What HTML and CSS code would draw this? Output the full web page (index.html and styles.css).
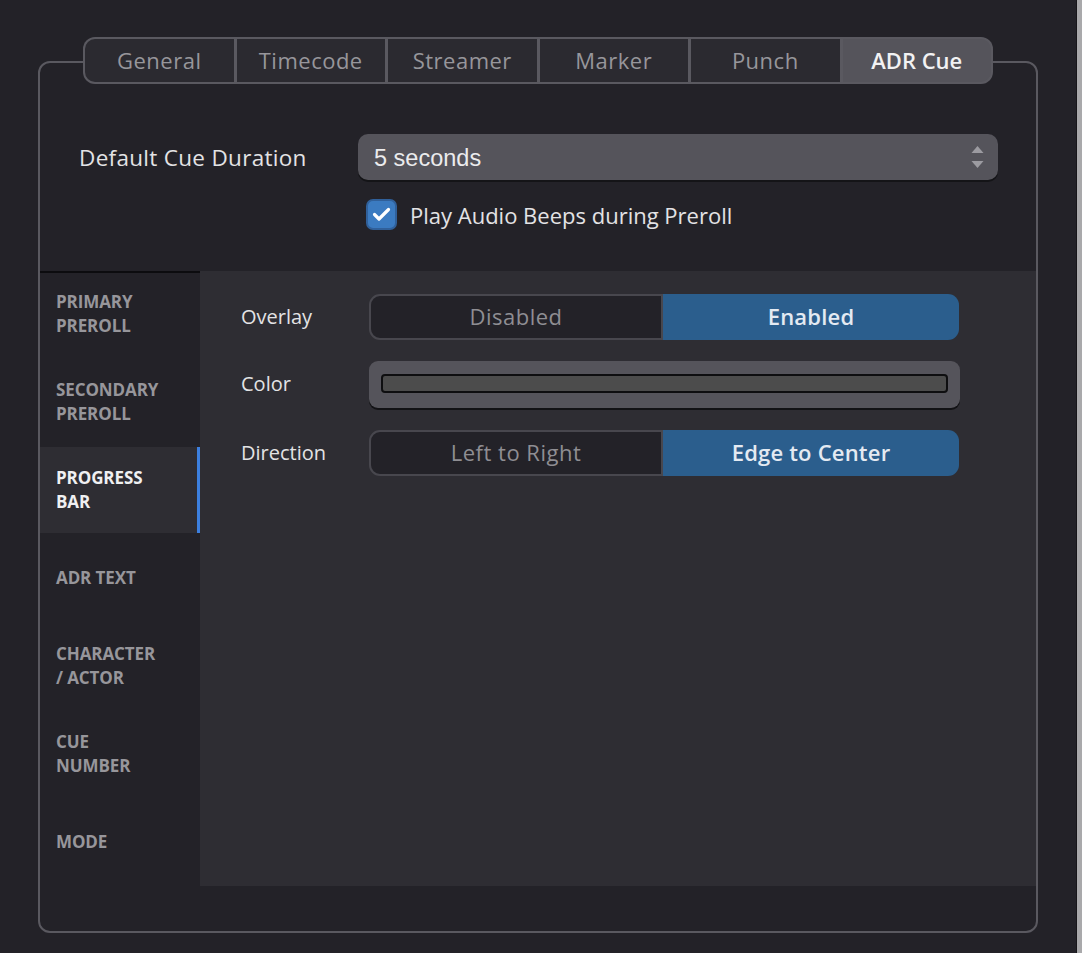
FILE: index.html
```html
<!DOCTYPE html>
<html>
<head>
<meta charset="utf-8">
<link rel="stylesheet" href="styles.css">
</head>
<body>
<div class="window">
  <div class="tabs">
    <div class="tab first">General</div>
    <div class="tab">Timecode</div>
    <div class="tab">Streamer</div>
    <div class="tab">Marker</div>
    <div class="tab">Punch</div>
    <div class="tab last active">ADR Cue</div>
  </div>
  <div class="group">
    <div class="top">
      <div class="row">
        <div class="row-label">Default Cue Duration</div>
        <div class="combo">
          <span class="combo-text">5 seconds</span>
          <svg class="combo-arrows" width="13" height="23" viewBox="0 0 13 23">
            <path d="M6.5 0 L12.5 7 L0.5 7 Z" fill="#9c9ba1"/>
            <path d="M0.5 15 L12.5 15 L6.5 22 Z" fill="#9c9ba1"/>
          </svg>
        </div>
      </div>
      <div class="check-row">
        <div class="checkbox">
          <svg width="19" height="15" viewBox="0 0 19 15">
            <path d="M2.5 7.5 L7 12 L16.5 2.5" fill="none" stroke="#ffffff" stroke-width="3.2" stroke-linecap="round" stroke-linejoin="round"/>
          </svg>
        </div>
        <span class="check-label">Play Audio Beeps during Preroll</span>
      </div>
    </div>
    <div class="lower">
      <div class="sidebar">
        <div class="side-item">PRIMARY<br>PREROLL</div>
        <div class="side-item">SECONDARY<br>PREROLL</div>
        <div class="side-item active">PROGRESS<br>BAR</div>
        <div class="side-item">ADR TEXT</div>
        <div class="side-item">CHARACTER<br>/ ACTOR</div>
        <div class="side-item">CUE<br>NUMBER</div>
        <div class="side-item">MODE</div>
      </div>
      <div class="panel">
        <div class="prow">
          <div class="plabel">Overlay</div>
          <div class="seg">
            <div class="seg-btn off">Disabled</div>
            <div class="seg-btn on">Enabled</div>
          </div>
        </div>
        <div class="prow color-row">
          <div class="plabel">Color</div>
          <div class="color-well">
            <div class="color-swatch"></div>
          </div>
        </div>
        <div class="prow">
          <div class="plabel">Direction</div>
          <div class="seg">
            <div class="seg-btn off">Left to Right</div>
            <div class="seg-btn on">Edge to Center</div>
          </div>
        </div>
      </div>
    </div>
  </div>
</div>
</body>
</html>
```
FILE: styles.css
```css
html {
  background: #a9a9ab;
}
body {
  margin: 0;
  font-family: "Open Sans", "Noto Sans", sans-serif;
}
.window {
  width: 1077px;
  height: 953px;
  box-sizing: border-box;
  background: #232228;
  border-right: 1px solid #17161a;
  padding: 37px 0 0 38px;
}
.tabs {
  position: relative;
  z-index: 1;
  display: flex;
  gap: 3px;
  width: 910px;
  height: 47px;
  box-sizing: border-box;
  margin-left: 45px;
  padding: 2px;
  background: #5a5960;
  border-radius: 12px;
}
.tab {
  flex: 1;
  display: flex;
  align-items: center;
  justify-content: center;
  padding-bottom: 2px;
  background: #2b2a30;
  color: #97969b;
  font-size: 22px;
  letter-spacing: 0.5px;
}
.tab.first {
  border-radius: 10px 0 0 10px;
}
.tab.last {
  border-radius: 0 10px 10px 0;
}
.tab.active {
  background: #55545b;
  color: #f2f2f3;
  font-weight: 600;
  letter-spacing: 0;
}
.group {
  width: 1000px;
  height: 872px;
  box-sizing: border-box;
  margin-top: -23px;
  border: 2px solid #5a5960;
  border-radius: 12px;
  padding-bottom: 45px;
  display: flex;
  flex-direction: column;
}
.top {
  height: 208px;
  box-sizing: border-box;
  padding: 71px 38px 0 39px;
}
.row {
  display: flex;
  align-items: center;
}
.row-label {
  width: 279px;
  color: #e3e3e5;
  font-size: 22.5px;
  letter-spacing: 0.3px;
}
.combo {
  flex: 1;
  height: 46px;
  display: flex;
  align-items: center;
  justify-content: space-between;
  background: #55545b;
  border-radius: 10px;
  box-shadow: 0 2px 0 #141417;
  padding: 0 14px 0 16px;
}
.combo-text {
  font-family: "Liberation Sans", Arial, sans-serif;
  font-size: 23.5px;
  color: #ebebed;
  padding-top: 2px;
}
.combo-arrows {
  display: block;
}
.check-row {
  display: flex;
  align-items: center;
  margin: 19px 0 0 287px;
}
.checkbox {
  width: 31px;
  height: 31px;
  box-sizing: border-box;
  background: #3b7bc1;
  border: 2px solid #30609a;
  border-radius: 7px;
  display: flex;
  align-items: center;
  justify-content: center;
}
.check-label {
  margin-left: 13px;
  font-size: 22px;
  color: #e3e3e5;
}
.lower {
  flex: 1;
  display: flex;
}
.sidebar {
  width: 160px;
  display: flex;
  flex-direction: column;
  gap: 2px;
  box-shadow: inset 0 2px 0 #0c0c0f;
}
.side-item {
  height: 86px;
  box-sizing: border-box;
  display: flex;
  align-items: center;
  padding-left: 16px;
  font-size: 17px;
  font-weight: 700;
  line-height: 24px;
  color: #97969b;
  letter-spacing: -0.1px;
}
.side-item.active {
  background: #2e2d33;
  color: #f0f0f2;
  border-right: 3px solid #3c7fdf;
}
.panel {
  flex: 1;
  background: #2e2d33;
  padding: 23px 0 0 41px;
  display: flex;
  flex-direction: column;
  gap: 21px;
}
.prow {
  display: flex;
  align-items: center;
  height: 46px;
}
.prow.color-row {
  height: 47px;
  margin-bottom: 1px;
}
.plabel {
  width: 128px;
  font-size: 20px;
  color: #e3e3e5;
  padding-bottom: 2px;
}
.seg {
  display: flex;
  width: 590px;
  height: 46px;
}
.seg-btn {
  display: flex;
  align-items: center;
  justify-content: center;
  box-sizing: border-box;
  font-size: 22px;
  letter-spacing: 0.5px;
  padding-bottom: 2px;
}
.seg-btn.off {
  width: 294px;
  background: #232228;
  color: #8f8e93;
  border: 2px solid #48474e;
  border-radius: 11px 0 0 11px;
}
.seg-btn.on {
  width: 296px;
  background: #2b5e8d;
  color: #e4eaf2;
  font-weight: 600;
  letter-spacing: 0.2px;
  border-radius: 0 11px 11px 0;
}
.color-well {
  width: 591px;
  height: 47px;
  box-sizing: border-box;
  padding: 13px 12px 15px 12px;
  background: #55545b;
  border-radius: 9px;
  box-shadow: 0 2px 0 #121215;
}
.color-swatch {
  height: 100%;
  box-sizing: border-box;
  background: #4c4c4c;
  border: 2px solid #0e0e10;
  border-radius: 4px;
}
```
